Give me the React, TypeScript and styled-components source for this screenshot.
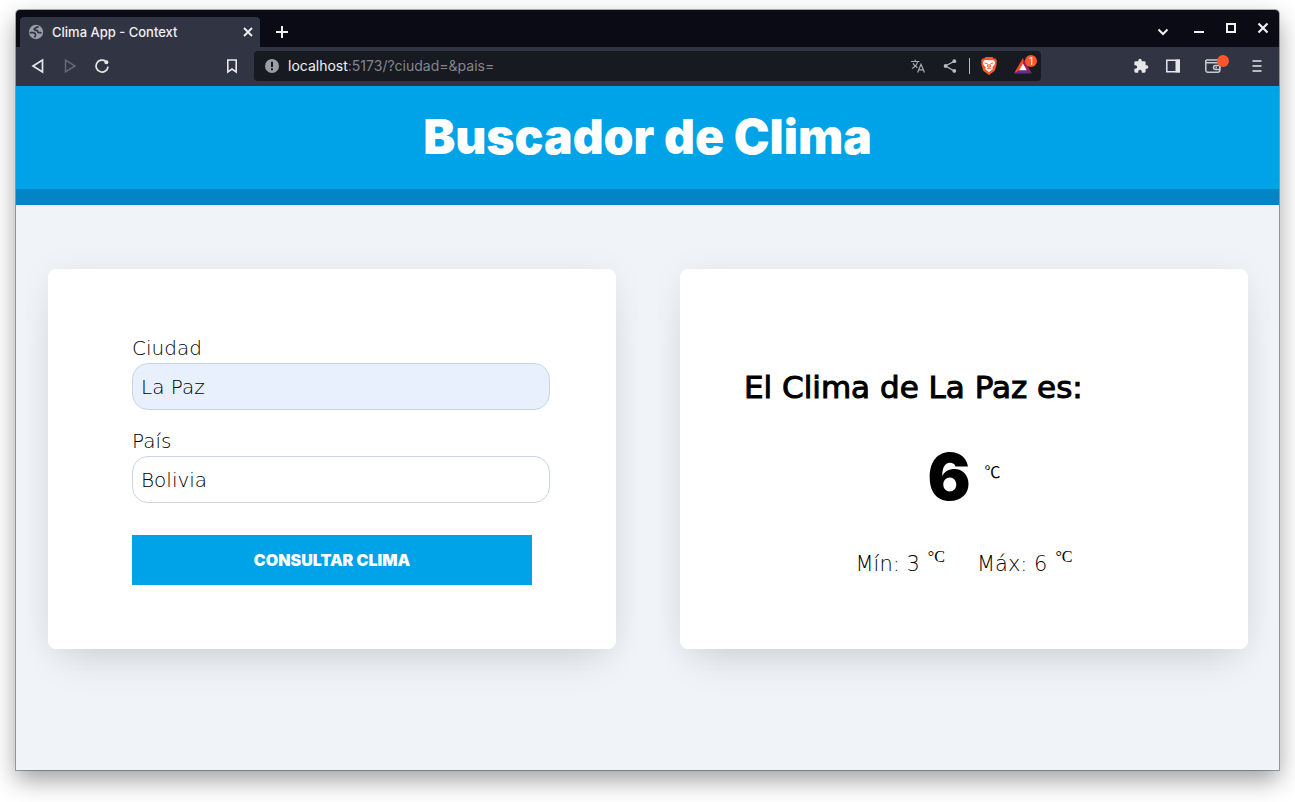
import React, { useState } from "react";
import styled, { createGlobalStyle } from "styled-components";

const GlobalStyle = createGlobalStyle`
  *, *::before, *::after { box-sizing: border-box; }
  body { margin: 0; background: #fff; font-family: Inter, "Liberation Sans", sans-serif; color: #000; }
  h1, h2, p { margin: 0; }
  button { border: 0; padding: 0; background: none; color: inherit; font: inherit; cursor: pointer; }
`;

const Desktop = styled.div`
  display: flex;
  min-height: 100vh;
  padding: 10px 16px 32px;
`;

const Window = styled.div`
  flex: 1;
  display: flex;
  flex-direction: column;
  min-width: 0;
  border-radius: 4px 4px 0 0;
  background: #f0f3f8;
  box-shadow: 0 0 0 1px rgba(0, 0, 0, 0.3), 0 10px 24px rgba(0, 0, 0, 0.38);
`;

const TitleBar = styled.div`
  display: flex;
  align-items: flex-end;
  height: 37px;
  padding: 0 0 0 4px;
  border-radius: 4px 4px 0 0;
  background: #0b0b15;
  color: #f0f0f2;
`;

const Tab = styled.div`
  display: flex;
  align-items: center;
  gap: 8px;
  width: 240px;
  height: 30px;
  padding: 0 4px 0 8px;
  border-radius: 4px 4px 0 0;
  background: #313442;
`;

const TabTitle = styled.span`
  flex: 1;
  font-size: 13px;
  line-height: 20px;
  font-weight: 500;
`;

const IconButton = styled.button<{ $width?: number; $height?: number }>`
  position: relative;
  display: flex;
  align-items: center;
  justify-content: center;
  flex: none;
  width: ${(p) => p.$width ?? 32}px;
  height: ${(p) => p.$height ?? 32}px;
  svg { display: block; overflow: visible; }
`;

const NewTab = styled(IconButton)`
  margin-left: 6px;
`;

const WindowControls = styled.div`
  display: flex;
  align-self: flex-start;
  margin-left: auto;
  padding-top: 2px;
`;

const ToolBar = styled.div`
  display: flex;
  align-items: center;
  height: 39px;
  padding-bottom: 2px;
  background: #313442;
  color: #e6e6e9;
`;

const ToolSide = styled.div<{ $end?: boolean }>`
  display: flex;
  flex: 0 0 238px;
  padding: 0 6px;
  justify-content: ${(p) => (p.$end ? "flex-end" : "space-between")};
`;

const ToolGroup = styled.div`
  display: flex;
`;

const AddressBar = styled.div`
  flex: 1;
  display: flex;
  align-items: center;
  min-width: 0;
  height: 30px;
  padding: 0 0 0 8px;
  border-radius: 4px;
  background: #181a21;
`;

const Url = styled.div`
  flex: 1;
  margin-left: 8px;
  font-size: 14px;
  line-height: 20px;
  color: #85868c;
  b { font-weight: 400; color: #f2f2f4; }
`;

const Divider = styled.span`
  width: 1px;
  height: 16px;
  margin: 0 3px;
  background: #b8b9bd;
`;

const Badge = styled.span<{ $right?: number }>`
  position: absolute;
  top: 5px;
  right: ${(p) => p.$right ?? 4}px;
  width: 12px;
  height: 12px;
  border-radius: 6px;
  background: #ff5530;
  color: #fff;
  font-size: 10px;
  line-height: 12px;
  text-align: center;
`;

const PageHeader = styled.header`
  padding: 24px;
  border-bottom: 16px solid #0284c7;
  background: #00a3e8;
  color: #fff;
  text-align: center;
`;

const PageTitle = styled.h1`
  font-size: 48px;
  line-height: 54px;
  padding-bottom: 1px;
  font-weight: 900;
`;

const Main = styled.main`
  display: grid;
  grid-template-columns: 1fr 1fr;
  gap: 64px;
  padding: 64px 31px 64px 32px;
`;

const Card = styled.section`
  min-height: 380px;
  padding: 64px;
  border-radius: 8px;
  background: #fff;
  box-shadow: 0 20px 40px -14px rgba(0, 20, 10, 0.14), 0 0 32px rgba(0, 40, 40, 0.05);
`;

const Form = styled.form`
  width: 400px;
  margin: 0 auto;
  font-family: "DejaVu Sans", sans-serif;
  font-weight: 200;
`;

const Field = styled.div`
  margin-bottom: 16px;
`;

const Label = styled.label`
  display: block;
  font-size: 20px;
  line-height: 30px;
`;

const Input = styled.input<{ $autofilled?: boolean }>`
  display: block;
  box-sizing: content-box;
  width: 100%;
  height: 45px;
  padding: 0 8px;
  border: 1px solid #cbd5e1;
  border-radius: 16px;
  outline: none;
  background: ${(p) => (p.$autofilled ? "#e8f0fe" : "#fff")};
  color: #000;
  font: inherit;
  font-size: 20px;
`;

const Submit = styled.button`
  display: block;
  width: 100%;
  height: 50px;
  margin-top: 32px;
  background: #00a3e8;
  color: #fff;
  font-family: Inter, sans-serif;
  font-size: 16px;
  font-weight: 900;
  text-transform: uppercase;
`;

const Result = styled(Card)`
  font-family: "DejaVu Sans", sans-serif;
  font-weight: 200;
`;

const ResultTitle = styled.h2`
  padding-top: 36px;
  font-size: 31px;
  line-height: 36px;
  font-weight: 400;
  -webkit-text-stroke: 1px #000;
`;

const Temperature = styled.p`
  display: flex;
  justify-content: center;
  gap: 14px;
  margin: 32px 0;
  font-family: Inter, sans-serif;
  font-size: 64px;
  line-height: 80px;
  font-weight: 900;
`;

const Unit = styled.span<{ $serif?: boolean }>`
  font-family: ${(p) => (p.$serif ? '"Liberation Serif", serif' : '"Noto Sans CJK JP", sans-serif')};
  font-size: 16px;
  line-height: ${(p) => (p.$serif ? 16 : 68)}px;
  font-weight: 400;
`;

const Range = styled.div`
  display: flex;
  justify-content: center;
  gap: 32px;
  font-size: 21px;
  line-height: 30px;
`;

const RangeItem = styled.p`
  display: flex;
  gap: 8px;
`;

const Stroke = ({ d, size = 16, w = 2, color = "currentColor" }: { d: string; size?: number; w?: number; color?: string }) => (
  <svg width={size} height={size} viewBox={`0 0 ${size} ${size}`} fill="none" stroke={color} strokeWidth={w} aria-hidden="true">
    <path d={d} />
  </svg>
);

const Globe = () => (
  <svg width="16" height="16" viewBox="0 0 16 16" aria-hidden="true">
    <circle cx="8" cy="8" r="7.2" fill="#9a9da6" />
    <path d="M10.600 2.600 8.600 3.200 6.200 5.200 7 6.400 9.200 6.400 10 8.400 13.600 8.800M1.600 8.600H5l2 .6.600 2.200-1.200 2" fill="none" stroke="#313442" strokeWidth="1.700" strokeLinejoin="round" />
  </svg>
);

const Info = () => (
  <svg width="18" height="14" viewBox="-3 0 18 14" aria-hidden="true">
    <circle cx="7" cy="7" r="7" fill="#9a9da6" />
    <path d="M7 2.800V8M7 9.300v2" stroke="#181a21" strokeWidth="2" />
  </svg>
);

const Reload = () => (
  <svg width="16" height="16" viewBox="0 0 16 16" aria-hidden="true">
    <path d="M11.700 3.300A6 6 0 1 0 14 8.600" fill="none" stroke="currentColor" strokeWidth="1.700" />
    <circle cx="12.400" cy="4.300" r="2" fill="currentColor" />
  </svg>
);

const Translate = () => (
  <svg width="16" height="16" viewBox="0 0 16 16" fill="none" stroke="#a9aab0" strokeWidth="1.200" aria-hidden="true">
    <path d="M1 3.500h8.500M5.200 1.800v1.700M2 10.500C5 8.800 7 6.500 7.600 3.500M3 5.200C4 7.500 5.500 8.700 7.400 9.600M7.600 14.500 11 6.200l3.500 8.300M8.800 11.800h4.500" />
  </svg>
);

const Share = () => (
  <svg width="16" height="16" viewBox="0 0 16 16" aria-hidden="true">
    <path d="M12.300 3.200 3.500 8l8.800 5" fill="none" stroke="#b9bac0" strokeWidth="1.300" />
    <circle cx="12.300" cy="3.200" r="1.900" fill="#b9bac0" />
    <circle cx="3.600" cy="8" r="1.900" fill="#b9bac0" />
    <circle cx="12.300" cy="12.900" r="1.900" fill="#b9bac0" />
  </svg>
);

const Brave = () => (
  <svg width="16" height="18" viewBox="0 0 16 18" aria-hidden="true">
    <path d="M4.600 0h6.800l1.400 1.600 1.900-.1L16 4l-.6 1.400.4 1.300-2 7L8 18l-5.800-4.300-2-7 .4-1.300L0 4l1.300-2.500 1.900.1z" fill="#fb542b" />
    <path d="M3.200 3.300 6 3l2 .6L10 3l2.800.3 1.300 2.100-.7 2.500-2.200 2.500.8 1.600L8 15l-4-3 .8-1.600-2.200-2.500-.7-2.500z" fill="#fff" />
    <path d="m3.600 6 2.600.6.600.8-.6 2L8 10.400l1.800-1-.6-2 .6-.8L12.400 6M8 7v3.400M5.800 12 8 11.100l2.200.9" fill="none" stroke="#fb542b" strokeWidth=".9" />
  </svg>
);

const Rewards = () => (
  <svg width="18" height="16" viewBox="0 0 18 16" aria-hidden="true">
    <path d="M9 0 0 15.500l9-5z" fill="#ff4724" />
    <path d="M0 15.500h18l-9-5z" fill="#662d91" />
    <path d="m9 0 9 15.500-9-5z" fill="#9e1f63" />
    <path d="m9 5.500 3.800 6.800H5.200z" fill="#fff" />
  </svg>
);

const Puzzle = () => (
  <svg width="16" height="16" viewBox="0 0 24 24" fill="currentColor" aria-hidden="true">
    <path d="M20.500 11H19V7a2 2 0 0 0-2-2h-4V3.500a2.500 2.500 0 0 0-5 0V5H4a2 2 0 0 0-2 2v3.800h1.500a2.700 2.700 0 0 1 0 5.400H2V20a2 2 0 0 0 2 2h3.800v-1.500a2.700 2.700 0 0 1 5.400 0V22H17a2 2 0 0 0 2-2v-4h1.500a2.500 2.500 0 0 0 0-5z" />
  </svg>
);

const Panel = () => (
  <svg width="14" height="14" viewBox="0 0 14 14" aria-hidden="true">
    <path d="M.8 1.300h12.400v11.400H.8z" fill="none" stroke="currentColor" strokeWidth="1.500" />
    <path d="M9.500.6H14v12.800H9.500z" fill="currentColor" />
  </svg>
);

const Wallet = () => (
  <svg width="16" height="14" viewBox="0 0 16 14" fill="none" stroke="#c9cad0" strokeWidth="1.500" aria-hidden="true">
    <path d="M14.800 4.200V3M1 1h12.500M.8 1v10.200A2 2 0 0 0 2.800 13.200h10a2 2 0 0 0 2-2M.8 3.800h12a2 2 0 0 1 2 2v5.400M15 6.500h-4.500a2 2 0 0 0 0 4H15zM10.500 8.500h1.500" />
  </svg>
);

const WalletButton = styled(IconButton)`
  margin: 0 12px 0 8px;
`;

export default function App() {
  const [city, setCity] = useState("La Paz");
  const [country, setCountry] = useState("Bolivia");

  return (
    <>
      <GlobalStyle />
      <Desktop>
        <Window>
          <TitleBar>
            <Tab>
              <Globe />
              <TabTitle>Clima App - Context</TabTitle>
              <IconButton $width={16} $height={16} aria-label="Close tab">
                <Stroke d="m4 4 8 8m0-8-8 8" w={1.8} />
              </IconButton>
            </Tab>
            <NewTab $height={30} aria-label="New tab">
              <Stroke d="M8 2v12M2 8h12" />
            </NewTab>
            <WindowControls>
              <IconButton $width={40} aria-label="Search tabs">
                <Stroke d="m3.500 9.500 4.500 4.500 4.500-4.500" />
              </IconButton>
              <IconButton aria-label="Minimize">
                <Stroke d="M3 12h10" />
              </IconButton>
              <IconButton aria-label="Maximize">
                <Stroke d="M4 4h8v8H4z" />
              </IconButton>
              <IconButton aria-label="Close">
                <Stroke d="m3.500 3.500 9 9m0-9-9 9" w={2.2} />
              </IconButton>
            </WindowControls>
          </TitleBar>
          <ToolBar>
            <ToolSide>
              <ToolGroup>
                <IconButton aria-label="Back">
                  <Stroke d="M12.500 2v12L3 8z" w={1.7} />
                </IconButton>
                <IconButton aria-label="Forward">
                  <Stroke d="M3.500 2v12L13 8z" w={1.5} color="#666874" />
                </IconButton>
                <IconButton aria-label="Reload">
                  <Reload />
                </IconButton>
              </ToolGroup>
              <IconButton aria-label="Bookmark this page">
                <Stroke d="M3.800 2h8.400v12L8 11l-4.200 3z" w={1.6} />
              </IconButton>
            </ToolSide>
            <AddressBar>
              <Info />
              <Url>
                <b>localhost</b>:5173/?ciudad=&amp;pais=
              </Url>
              <IconButton aria-label="Translate">
                <Translate />
              </IconButton>
              <IconButton aria-label="Share">
                <Share />
              </IconButton>
              <Divider />
              <IconButton aria-label="Brave Shields">
                <Brave />
              </IconButton>
              <IconButton $width={36} aria-label="Brave Rewards">
                <Rewards />
                <Badge>1</Badge>
              </IconButton>
            </AddressBar>
            <ToolSide $end>
              <IconButton aria-label="Extensions">
                <Puzzle />
              </IconButton>
              <IconButton aria-label="Sidebar">
                <Panel />
              </IconButton>
              <WalletButton aria-label="Wallet">
                <Wallet />
                <Badge $right={0} />
              </WalletButton>
              <IconButton aria-label="Menu">
                <Stroke d="M3.500 3h9M3.500 8h9M3.500 13h9" w={1.6} />
              </IconButton>
            </ToolSide>
          </ToolBar>
          <PageHeader>
            <PageTitle>Buscador de Clima</PageTitle>
          </PageHeader>
          <Main>
            <Card>
              <Form onSubmit={(e) => e.preventDefault()}>
                <Field>
                  <Label htmlFor="ciudad">Ciudad</Label>
                  <Input id="ciudad" name="ciudad" $autofilled value={city} onChange={(e) => setCity(e.target.value)} />
                </Field>
                <Field>
                  <Label htmlFor="pais">País</Label>
                  <Input id="pais" name="pais" value={country} onChange={(e) => setCountry(e.target.value)} />
                </Field>
                <Submit type="submit">Consultar Clima</Submit>
              </Form>
            </Card>
            <Result>
              <ResultTitle>El Clima de La Paz es:</ResultTitle>
              <Temperature>
                6 <Unit>℃</Unit>
              </Temperature>
              <Range>
                <RangeItem>
                  Mín: 3 <Unit $serif>°C</Unit>
                </RangeItem>
                <RangeItem>
                  Máx: 6 <Unit $serif>°C</Unit>
                </RangeItem>
              </Range>
            </Result>
          </Main>
        </Window>
      </Desktop>
    </>
  );
}
